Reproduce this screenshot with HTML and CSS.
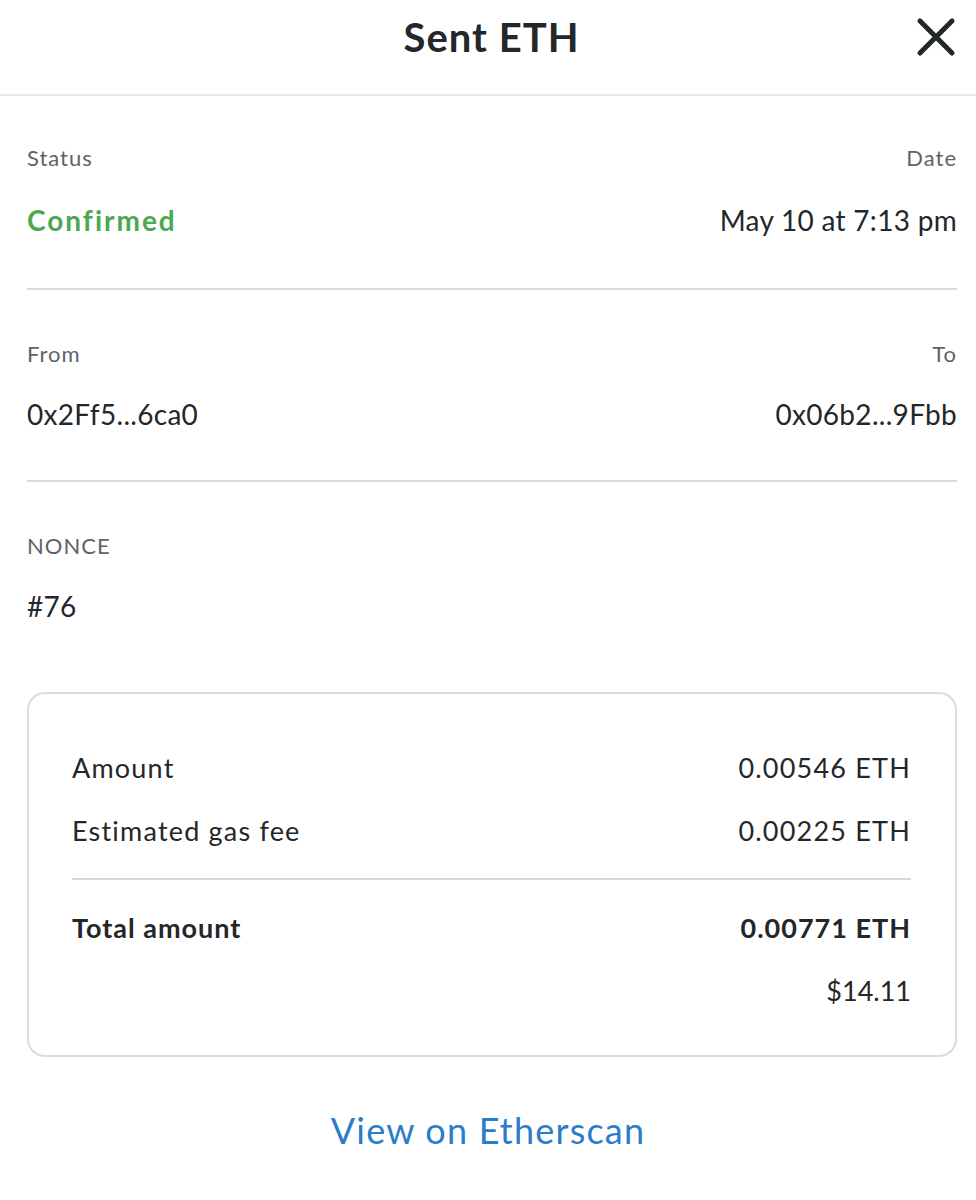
FILE: index.html
```html
<!DOCTYPE html>
<html lang="en">
<head>
    <meta charset="UTF-8">
    <meta name="viewport" content="width=device-width, initial-scale=1.0">
    <title>Sent ETH</title>
    <link rel="stylesheet" href="styles.css">
</head>
<body>
    <div class="header">
        <span></span>
        <h1 class="title">Sent ETH</h1>
        <button class="close" aria-label="Close">
            <svg width="40" height="40" viewBox="0 0 40 40">
                <path d="M4 4 L36 36 M36 4 L4 36" stroke="#24272a" stroke-width="5" stroke-linecap="round" fill="none"/>
            </svg>
        </button>
    </div>

    <div class="section first">
        <div class="row">
            <span class="label">Status</span>
            <span class="label">Date</span>
        </div>
        <div class="row values">
            <span class="value confirmed">Confirmed</span>
            <span class="value">May 10 at 7:13 pm</span>
        </div>
    </div>

    <div class="section">
        <div class="row">
            <span class="label">From</span>
            <span class="label">To</span>
        </div>
        <div class="row values">
            <span class="value">0x2Ff5...6ca0</span>
            <span class="value">0x06b2...9Fbb</span>
        </div>
    </div>

    <div class="section last">
        <div class="row">
            <span class="label">NONCE</span>
        </div>
        <div class="row values">
            <span class="value">#76</span>
        </div>
    </div>

    <div class="summary">
        <div class="line">
            <span>Amount</span>
            <span>0.00546 ETH</span>
        </div>
        <div class="line">
            <span>Estimated gas fee</span>
            <span>0.00225 ETH</span>
        </div>
        <div class="divider"></div>
        <div class="line total">
            <span>Total amount</span>
            <span>0.00771 ETH</span>
        </div>
        <div class="line">
            <span></span>
            <span class="fiat">$14.11</span>
        </div>
    </div>

    <div class="footer">
        <a class="link" href="#">View on Etherscan</a>
    </div>
</body>
</html>
```

FILE: styles.css
```css
*{
    margin: 0;
    padding: 0;
    box-sizing: border-box;
}
body{
    background: #fff;
    color: #24272a;
    font-family: "Lato", "Liberation Sans", sans-serif;
}
.header{
    height: 96px;
    display: grid;
    grid-template-columns: 1fr auto 1fr;
    align-items: center;
    padding: 0 20px 20px 27px;
    border-bottom: 2px solid #e6e7e8;
}
.title{
    font-size: 40px;
    font-weight: 700;
    letter-spacing: 1px;
    color: #24272a;
}
.close{
    justify-self: end;
    background: none;
    border: none;
    width: 40px;
    height: 40px;
    cursor: pointer;
}
.close svg{
    display: block;
}
.section{
    margin: 0 19px 0 27px;
    padding: 50px 0 48px;
    border-bottom: 2px solid #d9dadc;
}
.section.first{
    padding: 48px 0 50px;
}
.section.first .values{
    margin-top: 30px;
}
.section.last{
    border-bottom: none;
    padding-bottom: 0;
}
.row{
    display: flex;
    justify-content: space-between;
    align-items: center;
}
.label{
    font-size: 22px;
    line-height: 28px;
    letter-spacing: 1px;
    color: #5f6368;
}
.values{
    margin-top: 28px;
}
.value{
    font-size: 28px;
    line-height: 36px;
    letter-spacing: 0.3px;
    color: #24272a;
}
.confirmed{
    color: #4ba850;
    font-weight: 700;
    letter-spacing: 2px;
}
.summary{
    margin: 68px 19px 0 27px;
    padding: 56px 44px 46px 43px;
    border: 2px solid #dadbdd;
    border-radius: 18px;
    display: flex;
    flex-direction: column;
    gap: 27px;
}
.line{
    display: flex;
    justify-content: space-between;
    font-size: 27px;
    line-height: 36px;
    letter-spacing: 1.2px;
}
.divider{
    height: 2px;
    background: #d6d8da;
    margin: 2px 0 3px;
}
.total{
    font-weight: 700;
    letter-spacing: 1px;
}
.fiat{
    letter-spacing: 0;
}
.footer{
    margin-top: 51px;
    text-align: center;
}
.link{
    font-size: 36px;
    line-height: 44px;
    letter-spacing: 1.2px;
    color: #2b7cc9;
    text-decoration: none;
}
```
